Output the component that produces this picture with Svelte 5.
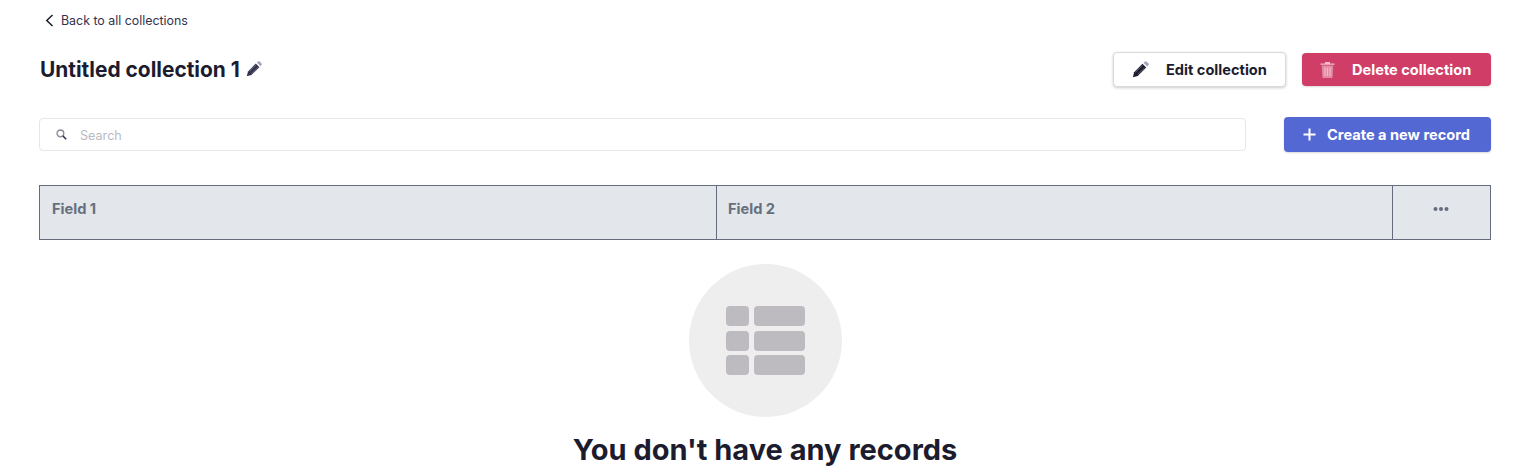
<script lang="ts">
  const columns = ['Field 1', 'Field 2'];
</script>

<main class="page">
  <a class="back" href="#back">
    <svg width="9" height="13" viewBox="0 0 9 13" aria-hidden="true">
      <path d="M7.5 1 L1.8 6.5 L7.5 12" fill="none" stroke="#1c1c2e" stroke-width="1.5" />
    </svg>
    <span>Back to all collections</span>
  </a>

  <header class="head">
    <h1>Untitled collection 1</h1>
    <svg class="pencil" width="16" height="16" viewBox="0 0 16 16" aria-hidden="true">
      <path d="M9.8 2.6 L13.4 6.2 L5.4 14 L.8 15.2 L2 10.6 Z" fill="#32324d" />
      <path d="M3.2 10.6 L9.9 4 M5.4 12.8 L12 6.2" stroke="#8e8ea9" stroke-width=".6" />
      <path d="M10.8 1.6 L11.9 .6 a1.4 1.4 0 0 1 1.9 0 L15.4 2.2 a1.4 1.4 0 0 1 0 1.9 L14.4 5.2 Z" fill="#a5a5ba" />
    </svg>
    <div class="actions">
      <button class="btn edit">
        <svg width="17" height="17" viewBox="0 0 16 16" aria-hidden="true">
          <path d="M9.8 2.6 L13.4 6.2 L5.4 14 L.8 15.2 L2 10.6 Z" fill="#1c1c2e" />
          <path d="M3.2 10.6 L9.9 4 M5.4 12.8 L12 6.2" stroke="#8e8ea9" stroke-width=".6" />
          <path d="M10.8 1.6 L11.9 .6 a1.4 1.4 0 0 1 1.9 0 L15.4 2.2 a1.4 1.4 0 0 1 0 1.9 L14.4 5.2 Z" fill="#a5a5ba" />
        </svg>
        <span>Edit collection</span>
      </button>
      <button class="btn delete">
        <svg width="15" height="17" viewBox="0 0 15 17" aria-hidden="true">
          <path d="M.5 2.4 H14.5 V3.8 H.5 Z M5 2.4 V1 H10 V2.4 Z" fill="#f0c0cd" />
          <path d="M1.8 4.4 H13.2 L12.6 16.2 Q12.6 17 11.8 17 H3.2 Q2.4 17 2.4 16.2 Z" fill="#e28aa3" />
          <path d="M5 6.5 V15 M7.5 6.5 V15 M10 6.5 V15" stroke="#efb9c8" stroke-width="1.2" />
        </svg>
        <span>Delete collection</span>
      </button>
    </div>
  </header>

  <div class="tools">
    <label class="search">
      <svg width="11" height="11" viewBox="0 0 11 11" aria-hidden="true">
        <circle cx="4.4" cy="4.4" r="3.4" fill="none" stroke="#8a8a98" stroke-width="1.3" />
        <path d="M7 7 L10.2 10.2" stroke="#32324d" stroke-width="1.6" />
      </svg>
      <input type="text" placeholder="Search" />
    </label>
    <button class="btn create">
      <svg width="13" height="13" viewBox="0 0 13 13" aria-hidden="true">
        <path d="M6.5 .5 V12.5 M.5 6.5 H12.5" stroke="#fff" stroke-width="2" />
      </svg>
      <span>Create a new record</span>
    </button>
  </div>

  <div class="table">
    {#each columns as col}
      <div class="cell">{col}</div>
    {/each}
    <div class="cell more">
      <svg width="16" height="4" viewBox="0 0 16 4" aria-hidden="true">
        <circle cx="2.5" cy="2" r="2" fill="#666c7e" />
        <circle cx="8" cy="2" r="2" fill="#666c7e" />
        <circle cx="13.5" cy="2" r="2" fill="#666c7e" />
      </svg>
    </div>
  </div>

  <section class="empty">
    <div class="circle">
      <div class="grid">
        <i></i><i></i><i></i><i></i><i></i><i></i>
      </div>
    </div>
    <h2>You don't have any records</h2>
  </section>
</main>

<style>
  :global(body) {
    margin: 0;
    background: #fff;
    overflow: hidden;
  }

  .page {
    box-sizing: border-box;
    width: 1525px;
    height: 475px;
    overflow: hidden;
    padding: 12px 34px 0 39px;
    font-family: Inter, Lato, sans-serif;
    color: #1c1c2e;
  }

  .back {
    display: flex;
    align-items: center;
    gap: 7px;
    height: 16px;
    margin-left: 6px;
    font-size: 12.4px;
    color: #32324d;
    text-decoration: none;
  }

  .head {
    display: flex;
    align-items: center;
    margin-top: 23px;
    height: 36px;
    padding-left: 1px;
  }

  h1 {
    margin: 0;
    font-size: 20.9px;
    font-weight: 700;
    color: #1c1c2e;
  }

  .pencil {
    margin-left: 6px;
  }

  .actions {
    display: flex;
    align-items: center;
    gap: 16px;
    margin-left: auto;
  }

  .btn {
    display: flex;
    align-items: center;
    box-sizing: border-box;
    height: 33px;
    padding-top: 2px;
    border: 0;
    border-radius: 4px;
    font-family: inherit;
    font-size: 14.6px;
    font-weight: 700;
    color: #fff;
    box-shadow: 0 1px 2px rgba(0, 0, 0, 0.15);
  }

  .edit {
    width: 173px;
    height: 35px;
    gap: 17px;
    padding-left: 18px;
    background: #fff;
    color: #1c1c2e;
    border: 1px solid #d9d9de;
    box-shadow: 0 1px 3px rgba(0, 0, 0, 0.2);
  }

  .delete {
    width: 189px;
    gap: 17px;
    padding-left: 18px;
    background: #d03d66;
  }

  .tools {
    display: flex;
    align-items: center;
    justify-content: space-between;
    margin-top: 29px;
    height: 36px;
  }

  .search {
    display: flex;
    align-items: center;
    gap: 13px;
    box-sizing: border-box;
    width: 1207px;
    height: 33px;
    padding: 0 12px 0 16px;
    border: 1px solid #e3e6ea;
    border-radius: 4px;
  }

  input {
    flex: 1;
    border: 0;
    outline: 0;
    padding: 2px 0 0;
    font-family: inherit;
    font-size: 12.6px;
  }

  input::placeholder {
    color: #b9b9c3;
  }

  .create {
    width: 207px;
    height: 35px;
    gap: 11px;
    padding-left: 19px;
    background: #5468d4;
  }

  .table {
    display: grid;
    grid-template-columns: 677px 676px 1fr;
    box-sizing: border-box;
    height: 55px;
    margin-top: 33px;
    background: #e3e6ea;
    border: 1px solid #666c7e;
  }

  .cell {
    display: flex;
    align-items: center;
    padding-left: 12px;
    font-size: 14.6px;
    font-weight: 700;
    color: #666f7d;
    border-right: 1px solid #666c7e;
    padding-bottom: 8px;
  }

  .cell:nth-child(2) {
    padding-left: 11px;
  }

  .cell.more {
    border-right: 0;
    padding-left: 0;
    padding-right: 2px;
    justify-content: center;
  }

  .empty {
    display: flex;
    flex-direction: column;
    align-items: center;
    margin-top: 24px;
  }

  .circle {
    display: flex;
    align-items: center;
    justify-content: center;
    width: 153px;
    height: 153px;
    border-radius: 50%;
    background: #eeeeee;
  }

  .grid {
    display: grid;
    grid-template-columns: 23px 51px;
    grid-auto-rows: 20px;
    gap: 4.5px 5px;
  }

  .grid i {
    display: block;
    background: #bdbbc0;
    border-radius: 4px;
  }

  h2 {
    margin: 15px 0 0;
    font-size: 29px;
    font-weight: 700;
    color: #1c1c2e;
  }
</style>
